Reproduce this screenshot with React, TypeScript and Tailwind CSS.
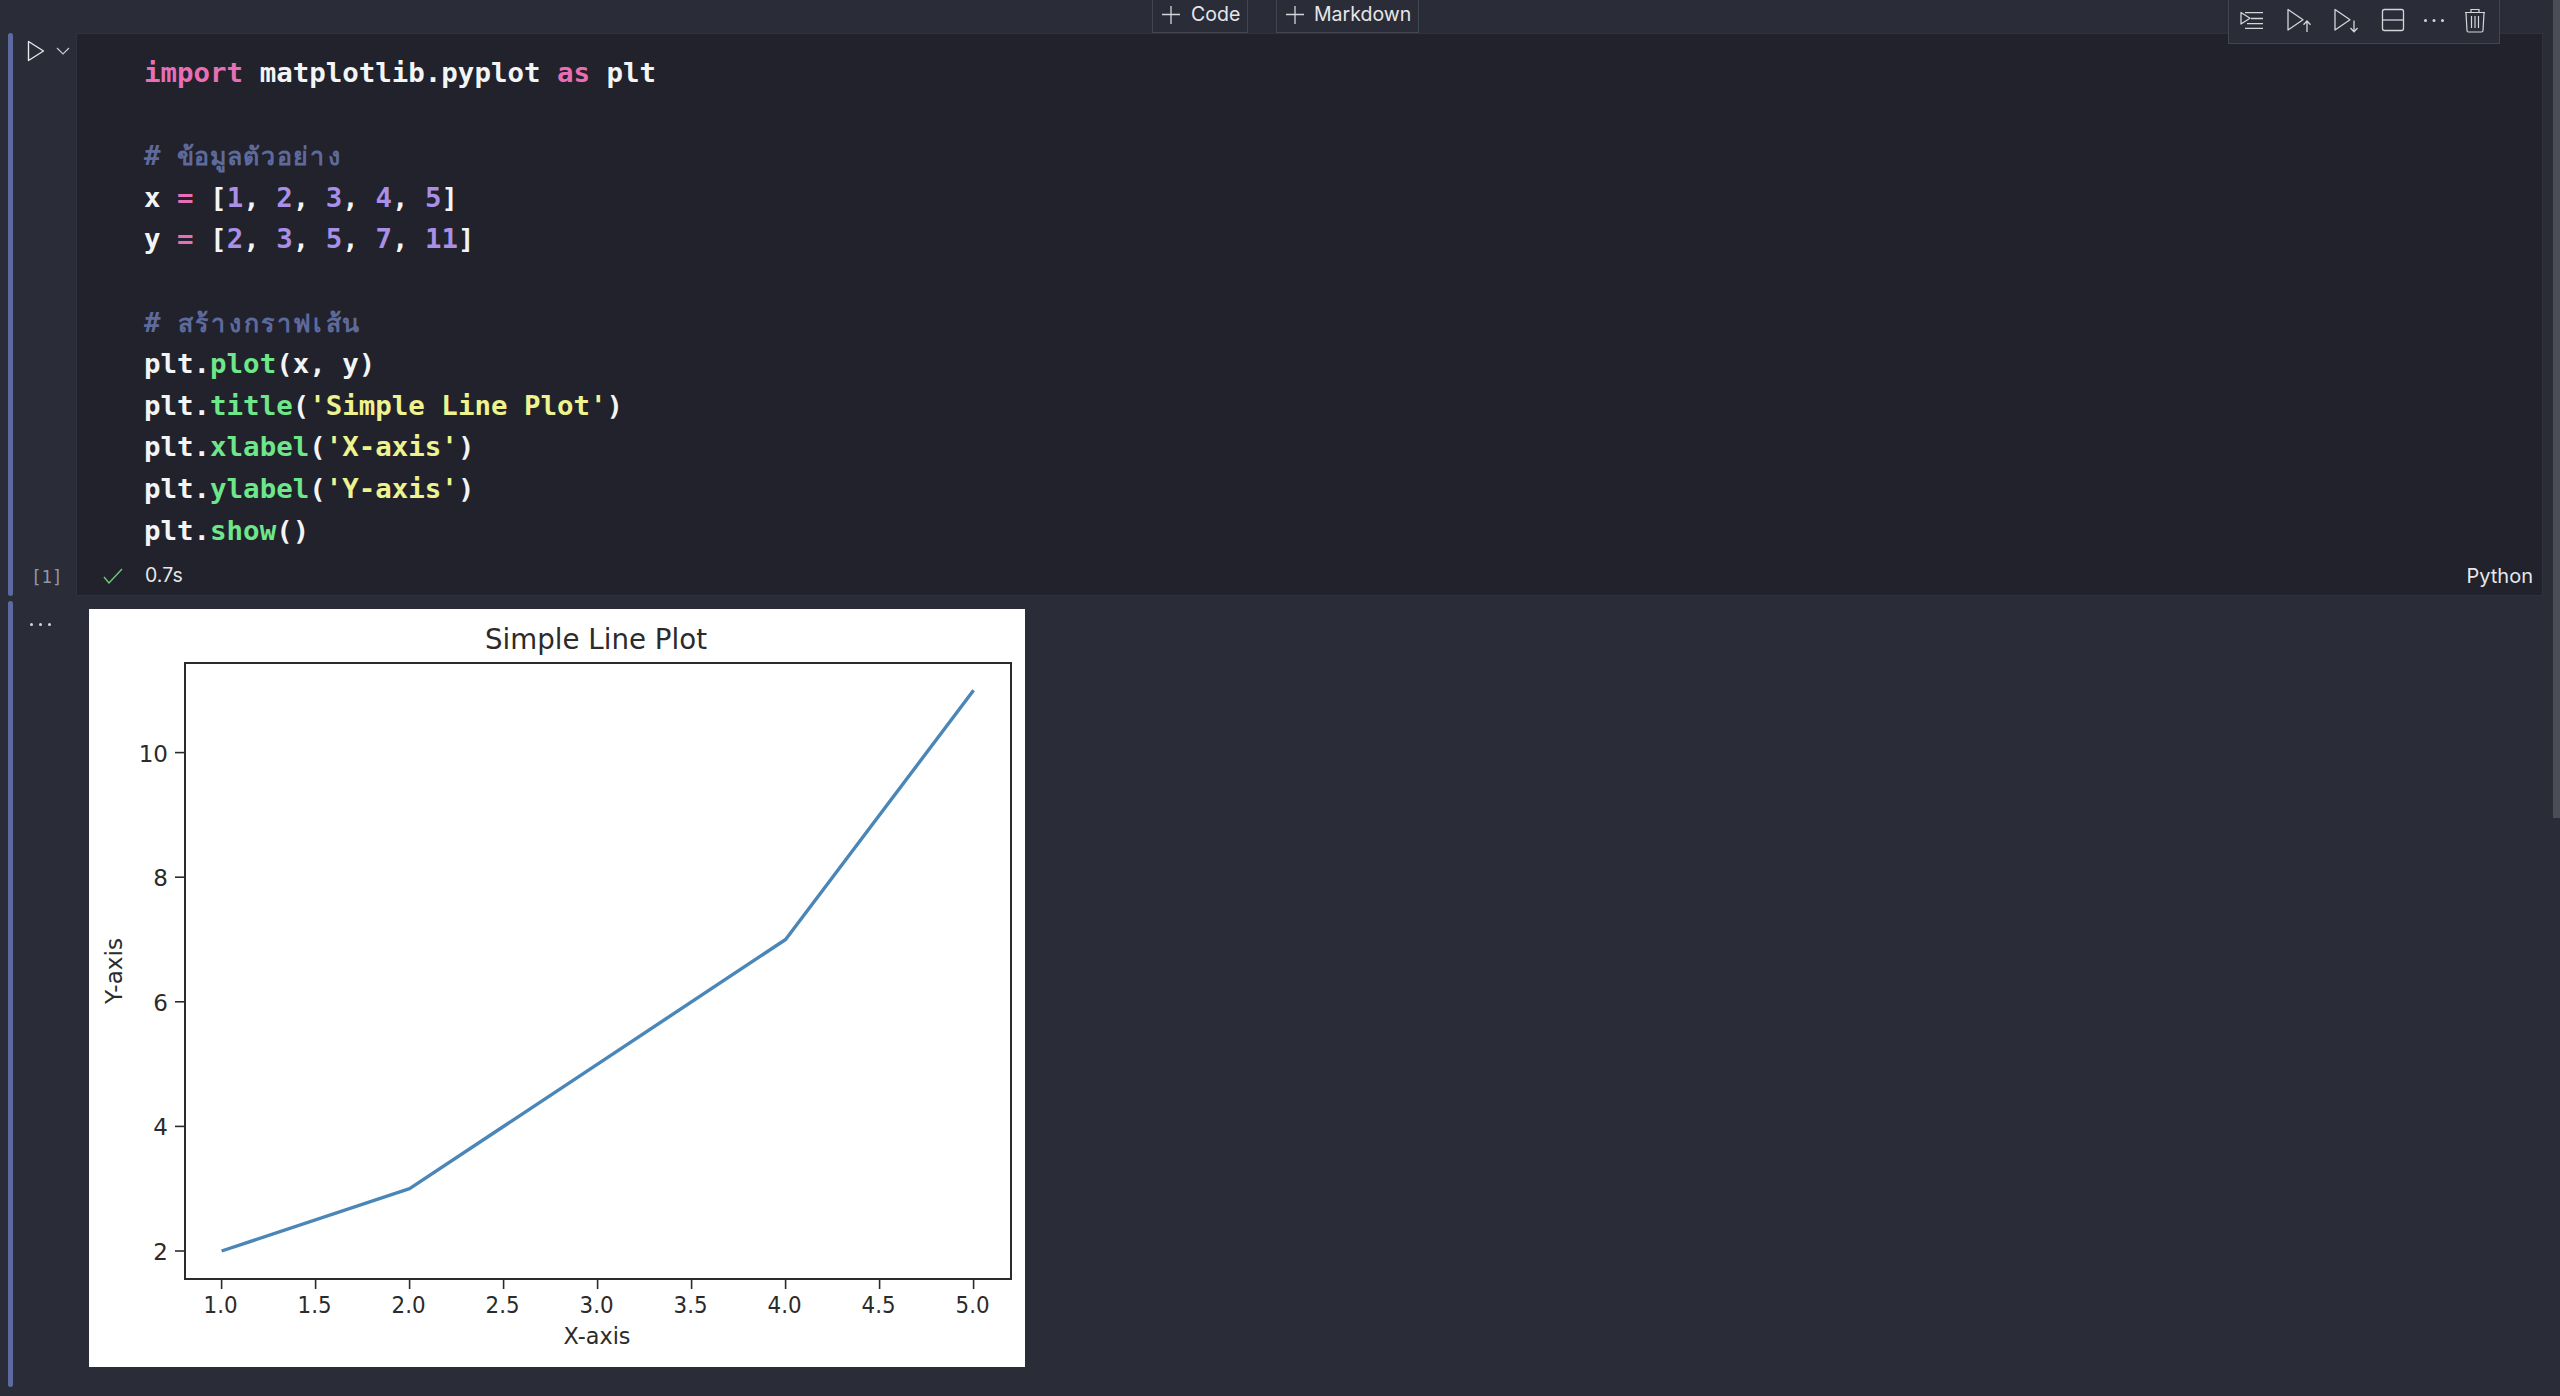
const KEY = "text-[#e86fb4]";
const NUM = "text-[#a98fe6]";
const FN = "text-[#6ee68a]";
const STR = "text-[#eef28f]";
const CMT = "text-[#5f6a9c]";

const xTicks = [
  { label: "1.0", v: 1 },
  { label: "1.5", v: 1.5 },
  { label: "2.0", v: 2 },
  { label: "2.5", v: 2.5 },
  { label: "3.0", v: 3 },
  { label: "3.5", v: 3.5 },
  { label: "4.0", v: 4 },
  { label: "4.5", v: 4.5 },
  { label: "5.0", v: 5 },
];
const yTicks = [2, 4, 6, 8, 10];
const points: [number, number][] = [
  [1, 2],
  [2, 3],
  [3, 5],
  [4, 7],
  [5, 11],
];

// each Thai base letter sits in its own monospace cell, as in the editor
const COMMENT_1 = ["ข้", "อ", "มู", "ล", "ตั", "ว", "อ", "ย่", "า", "ง"];
const COMMENT_2 = ["ส", "ร้", "า", "ง", "ก", "ร", "า", "ฟ", "เ", "ส้", "น"];

// chart coordinates, measured on the picture (image origin at its top left)
const px = (v: number) => 132.6 + (v - 1) * 188;
const py = (v: number) => 642 - (v - 2) * 62.3;

function Plot() {
  return (
    <svg width="936" height="758" viewBox="0 0 936 758" className="block bg-white shrink-0">
      <g fontFamily="'DejaVu Sans', sans-serif" fill="#2b2b2b">
        <text x="507" y="40" fontSize="29" textAnchor="middle" textLength="222" lengthAdjust="spacingAndGlyphs">
          Simple Line Plot
        </text>
        <rect x="96" y="54" width="826" height="616" fill="none" stroke="#2b2b2b" strokeWidth="2" />
        {xTicks.map((t) => (
          <g key={t.label}>
            <line x1={px(t.v)} x2={px(t.v)} y1="670" y2="680" stroke="#2b2b2b" strokeWidth="1.6" />
            <text x={px(t.v) - 1} y="704" fontSize="23" textAnchor="middle" textLength="34" lengthAdjust="spacingAndGlyphs">
              {t.label}
            </text>
          </g>
        ))}
        {yTicks.map((t) => (
          <g key={t}>
            <line x1="86" x2="96" y1={py(t)} y2={py(t)} stroke="#2b2b2b" strokeWidth="1.6" />
            <text x="79" y={py(t) + 9} fontSize="23" textAnchor="end">
              {t}
            </text>
          </g>
        ))}
        <text x="508" y="735" fontSize="23" textAnchor="middle" textLength="67" lengthAdjust="spacingAndGlyphs">
          X-axis
        </text>
        <text
          transform="translate(33 362) rotate(-90)"
          fontSize="23"
          textAnchor="middle"
          textLength="66"
          lengthAdjust="spacingAndGlyphs"
        >
          Y-axis
        </text>
      </g>
      <polyline
        points={points.map(([x, y]) => `${px(x)},${py(y)}`).join(" ")}
        fill="none"
        stroke="#4a86b8"
        strokeWidth="3.4"
        strokeLinejoin="round"
      />
    </svg>
  );
}

function Plus() {
  return (
    <svg width="20" height="20" viewBox="0 0 20 20" stroke="#d5d6da" strokeWidth="1.3" className="shrink-0">
      <path d="M10 1v18M1 9.500h18" />
    </svg>
  );
}

function PlayArrow({ down }: { down?: boolean }) {
  return (
    <svg width="30" height="30" viewBox="0 0 30 30" fill="none" stroke="#d5d6da" strokeWidth="1.3">
      <path d="M4 4.500v20.500l15-10.200z" strokeLinejoin="round" />
      {down ? (
        <path d="M23 15.500v11M19.500 23l3.500 3.700 3.500-3.700" />
      ) : (
        <path d="M23 27v-11M19.500 19.700l3.500-3.700 3.500 3.700" />
      )}
    </svg>
  );
}

function CellToolbar() {
  return (
    <div className="absolute top-0 left-[2228px] flex h-[44px] w-[272px] items-center pb-[3px] bg-[#2a2c37] border border-t-0 border-[#43454f]">
      <div className="flex w-[47px] justify-center">
        <svg width="30" height="30" viewBox="0 0 30 30" fill="none" stroke="#d5d6da" strokeWidth="1.3">
          <path d="M4 7.500v11.500l9-5.700z" strokeLinejoin="round" />
          <path d="M8 7.700h18M14 13.500h12M10 18.700h16M8 23.300h18" />
        </svg>
      </div>
      <div className="flex w-[47px] justify-center">
        <PlayArrow />
      </div>
      <div className="flex w-[47px] justify-center">
        <PlayArrow down />
      </div>
      <div className="flex w-[48px] justify-center">
        <svg width="30" height="30" viewBox="0 0 30 30" fill="none" stroke="#d5d6da" strokeWidth="1.3">
          <rect x="4.500" y="4.500" width="21" height="21" rx="2" />
          <path d="M4.500 15h21" />
        </svg>
      </div>
      <div className="flex w-[34px] justify-center">
        <svg width="30" height="30" viewBox="0 0 30 30" fill="#d5d6da">
          <circle cx="6.500" cy="15.500" r="1.500" />
          <circle cx="15" cy="15.500" r="1.500" />
          <circle cx="23.500" cy="15.500" r="1.500" />
        </svg>
      </div>
      <div className="flex w-[48px] justify-center">
        <svg width="30" height="30" viewBox="0 0 30 30" fill="none" stroke="#d5d6da" strokeWidth="1.2">
          <path d="M6 8l1 17.500a1.500 1.500 0 0 0 1.500 1.500h13a1.500 1.500 0 0 0 1.500-1.500L24 8" />
          <path d="M5 7.500h20M11 7v-2.500h8V7" />
          <path d="M11.500 11v12M15 11v12M18.500 11v12" />
        </svg>
      </div>
    </div>
  );
}

function ThaiComment({ letters }: { letters: string[] }) {
  return (
    <div className={`${CMT} flex`}>
      <span>#&nbsp;</span>
      {letters.map((l, i) => (
        <span key={i} className="w-[16.5px] text-center font-['Noto_Sans','DejaVu_Sans',sans-serif] text-[25px] font-semibold">
          {l}
        </span>
      ))}
    </div>
  );
}

function CodeLines() {
  return (
    <pre className="pt-[18px] pl-[67px] font-['DejaVu_Sans_Mono','Noto_Sans',monospace] text-[27.45px] leading-[41.6px] font-bold text-[#f3f4f6]">
      <div>
        <span className={KEY}>import</span> matplotlib.pyplot <span className={KEY}>as</span> plt
      </div>
      <div>&nbsp;</div>
      <ThaiComment letters={COMMENT_1} />
      <div>
        x <span className={KEY}>=</span> [<span className={NUM}>1</span>, <span className={NUM}>2</span>,{" "}
        <span className={NUM}>3</span>, <span className={NUM}>4</span>, <span className={NUM}>5</span>]
      </div>
      <div>
        y <span className={KEY}>=</span> [<span className={NUM}>2</span>, <span className={NUM}>3</span>,{" "}
        <span className={NUM}>5</span>, <span className={NUM}>7</span>, <span className={NUM}>11</span>]
      </div>
      <div>&nbsp;</div>
      <ThaiComment letters={COMMENT_2} />
      <div>
        plt.<span className={FN}>plot</span>(x, y)
      </div>
      <div>
        plt.<span className={FN}>title</span>(<span className={STR}>'Simple Line Plot'</span>)
      </div>
      <div>
        plt.<span className={FN}>xlabel</span>(<span className={STR}>'X-axis'</span>)
      </div>
      <div>
        plt.<span className={FN}>ylabel</span>(<span className={STR}>'Y-axis'</span>)
      </div>
      <div>
        plt.<span className={FN}>show</span>()
      </div>
    </pre>
  );
}

export default function App() {
  return (
    <div className="relative h-[1396px] w-[2560px] overflow-hidden bg-[#2a2c37] font-['Inter',sans-serif] text-[#e6e7ea]">
      {/* add cell buttons */}
      <div className="flex h-[33px] pl-[1152px] gap-[28px]">
        <div className="flex w-[96px] items-center gap-[10px] pl-[8px] pb-[3px] border-x border-b border-[#43454f] text-[19.5px]">
          <Plus />
          <span>Code</span>
        </div>
        <div className="flex w-[143px] items-center gap-[9px] pl-[8px] pb-[3px] border-x border-b border-[#43454f] text-[19.5px]">
          <Plus />
          <span>Markdown</span>
        </div>
      </div>
      <CellToolbar />

      {/* code cell */}
      <div className="flex h-[563px] pl-[8px] pr-[17px]">
        <div className="w-[5px] rounded-sm bg-[#5c6aa0]" />
        <div className="relative w-[63px]">
          <div className="flex items-center gap-[11px] pt-[7px] pl-[14px]">
            <svg width="18" height="22" viewBox="0 0 18 22" fill="none" stroke="#e6e7ea" strokeWidth="1.4">
              <path d="M1.500 1.500v19l15-9.500z" strokeLinejoin="round" />
            </svg>
            <svg width="14" height="10" viewBox="0 0 14 10" fill="none" stroke="#c9cad0" strokeWidth="1.2">
              <path d="M1 2l6 6 6-6" />
            </svg>
          </div>
          <span className="absolute left-[18px] top-[532px] font-['DejaVu_Sans_Mono',monospace] text-[17.5px] leading-6 text-[#9497a3]">
            [1]
          </span>
        </div>
        <div className="flex flex-1 flex-col justify-between bg-[#21222c] border border-[#2f313c]">
          <CodeLines />
          <div className="flex h-[46px] items-center pt-[6px] pl-[26px] pr-[9px] text-[19.5px]">
            <svg width="20" height="16" viewBox="0 0 20 16" fill="none" stroke="#6fca78" strokeWidth="1.4">
              <path d="M1 9l5 6L19 1" />
            </svg>
            <span className="ml-[22px]">0.7s</span>
            <span className="ml-auto text-[20px]">Python</span>
          </div>
        </div>
      </div>

      {/* output */}
      <div className="flex h-[791px] pt-[5px] pl-[8px]">
        <div className="w-[5px] rounded-sm bg-[#5c6aa0]" />
        <div className="flex w-[76px] shrink-0 gap-[6px] pl-[17px] pt-[22px]">
          <span className="h-[3px] w-[3px] rounded-full bg-[#d5d6da]" />
          <span className="h-[3px] w-[3px] rounded-full bg-[#d5d6da]" />
          <span className="h-[3px] w-[3px] rounded-full bg-[#d5d6da]" />
        </div>
        <div className="pt-[8px]">
          <Plot />
        </div>
      </div>

      {/* scrollbar */}
      <div className="absolute right-0 top-0 h-[818px] w-[7px] bg-[#4a4c56]" />
    </div>
  );
}
